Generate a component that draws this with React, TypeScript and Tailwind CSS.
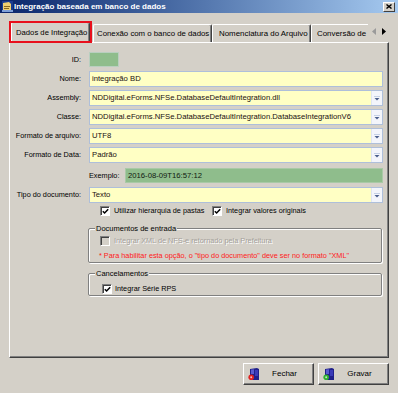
import React from "react";

function Check({ checked, disabled }: { checked?: boolean; disabled?: boolean }) {
  return (
    <span
      className={
        disabled
          ? "relative block w-[10px] h-[10px] shrink-0 border border-t-[#808080] border-l-[#808080] border-r-white border-b-white shadow-[inset_1px_1px_0_#404040] bg-[#d4d0c8]"
          : "relative block w-[10px] h-[10px] shrink-0 border border-t-[#808080] border-l-[#808080] border-r-white border-b-white shadow-[inset_1px_1px_0_#404040] bg-white"
      }
    >
      {checked && (
        <svg className="absolute left-[1px] top-[1px]" width="7" height="7" viewBox="0 0 7 7">
          <path d="M0.8 3.2 L2.6 5 L6.2 1.2" stroke="#000" strokeWidth="1.5" fill="none" />
        </svg>
      )}
    </span>
  );
}

function Arrow() {
  return (
    <div className="ml-auto w-[11px] h-full flex items-center justify-center bg-[#f3f5fb] border-l border-[#dfe6f2]">
      <svg width="6" height="5" viewBox="0 0 6 5">
        <rect x="0" y="0" width="6" height="1" fill="#c5d1e6" />
        <path d="M0.5 2 L5.5 2 L3 4.5 Z" fill="#4a5f8c" />
      </svg>
    </div>
  );
}

function Field({ text, select }: { text: string; select?: boolean }) {
  return (
    <div className="flex items-center w-[294px] h-full bg-[#ffffc4] border border-[#aebfda] overflow-hidden">
      <span className="pl-[2px] text-[7.7px] text-[#1a1010] whitespace-nowrap leading-none">{text}</span>
      {select && <Arrow />}
    </div>
  );
}

function Row({ label, children, cls }: { label: string; children: React.ReactNode; cls: string }) {
  return (
    <div className={"flex items-center " + cls}>
      <div className="w-[72px] text-right text-[7.3px] leading-none whitespace-nowrap pr-[1px]">{label}</div>
      <div className="ml-[7px] h-full flex">{children}</div>
    </div>
  );
}

function FloppyIcon({ color }: { color: string }) {
  return (
    <svg width="12" height="13" viewBox="0 0 12 13">
      <path d="M2 1 L9 0 L11 1 L11 12 L3 12 L2 11 Z" fill="#20208a" />
      <rect x="7" y="2" width="3" height="6" fill="#3a3ab8" />
      <path d="M3 1.5 L6 1.2 L6 6 L3 6 Z" fill="#5a5ad0" />
      <circle cx="3.2" cy="9.3" r="2.8" fill={color} />
      <circle cx="3.2" cy="9.3" r="1" fill="#fff" opacity="0.7" />
    </svg>
  );
}

function Button({ label, color }: { label: string; color: string }) {
  return (
    <div className="relative w-[71px] h-[22px] flex items-center bg-[#d4d0c8] border border-t-white border-l-white border-r-[#404040] border-b-[#404040] shadow-[inset_-1px_-1px_0_#808080]">
      <div className="ml-[4px] mt-[1px]">
        <FloppyIcon color={color} />
      </div>
      <span className="flex-1 text-center text-[8px] leading-none pr-[4px]">{label}</span>
    </div>
  );
}

export default function App() {
  return (
    <div className="relative w-[398px] h-[393px] overflow-hidden bg-[#d4d0c8] text-black font-['Liberation_Sans',Arial,sans-serif]">
      {/* Title bar */}
      <div className="h-[13px] flex items-center bg-linear-to-r from-[#0a246a] to-[#a6caf0]">
        <svg className="ml-[2px]" width="11" height="11" viewBox="0 0 11 11">
          <rect x="0" y="0" width="11" height="11" fill="#1b3d8f" />
          <path d="M1 2 L7 1 L9 3 L9 9 L1 9 Z" fill="#f0d070" />
          <rect x="2" y="5" width="6" height="1" fill="#8a6a20" />
          <rect x="2" y="7" width="5" height="1" fill="#8a6a20" />
          <rect x="0" y="9" width="11" height="2" fill="#7fa0d8" />
        </svg>
        <span className="ml-[1px] text-white font-bold text-[8px] leading-none whitespace-nowrap">
          Integração baseada em banco de dados
        </span>
        <div className="ml-auto mr-[3px] w-[12px] h-[10px] flex items-center justify-center bg-[#d4d0c8] border border-t-white border-l-white border-r-[#404040] border-b-[#404040]">
          <svg width="6" height="5" viewBox="0 0 6 5">
            <path d="M0.5 0.5 L5.5 4.5 M5.5 0.5 L0.5 4.5" stroke="#000" strokeWidth="1.4" />
          </svg>
        </div>
      </div>

      {/* Tabs */}
      <div className="h-[29px] flex items-end pl-[11px]">
        <div className="relative z-10 w-[79px] h-[21px] -mb-[1px] flex items-center pl-[4px] bg-[#d4d0c8] border-t border-l border-white border-r border-r-[#404040] rounded-t-[2px] shadow-[inset_-1px_0_0_#808080]">
          <span className="text-[7.7px] leading-none whitespace-nowrap">Dados de Integração</span>
        </div>
        <div className="ml-[3px] w-[119px] h-[18px] flex items-center pl-[3px] border-t border-l border-white border-r border-r-[#404040] rounded-t-[2px] shadow-[inset_-1px_0_0_#808080]">
          <span className="text-[7.8px] leading-none whitespace-nowrap">Conexão com o banco de dados</span>
        </div>
        <div className="w-[99px] h-[18px] flex items-center pl-[6px] border-t border-l border-white border-r border-r-[#404040] rounded-t-[2px] shadow-[inset_-1px_0_0_#808080]">
          <span className="text-[7.9px] leading-none whitespace-nowrap">Nomenclatura do Arquivo</span>
        </div>
        <div className="w-[57px] h-[18px] flex items-center pl-[5px] border-t border-l border-white rounded-tl-[2px]">
          <span className="text-[7.9px] leading-none whitespace-nowrap">Conversão de</span>
        </div>
        <div className="h-[18px] flex items-center gap-[6px] ml-[4px] mb-[2px]">
          <svg width="4" height="7" viewBox="0 0 4 7">
            <path d="M4 0 L0 3.5 L4 7 Z" fill="#9a9a9a" />
          </svg>
          <svg width="4" height="7" viewBox="0 0 4 7">
            <path d="M0 0 L4 3.5 L0 7 Z" fill="#000" />
          </svg>
        </div>
      </div>

      {/* Panel */}
      <div className="ml-[9px] w-[380px] h-[316px] border-t border-l border-white border-r border-b border-r-[#404040] border-b-[#404040] shadow-[inset_-1px_-1px_0_#808080]">
        <div className="flex flex-col pt-[9px]">
          <Row label="ID:" cls="h-[15px]">
            <div className="w-[30px] h-full bg-[#8fbd8c] border border-[#b9cfc0]" />
          </Row>
          <Row label="Nome:" cls="h-[16px] mt-[4px]">
            <Field text="integração BD" />
          </Row>
          <Row label="Assembly:" cls="h-[16px] mt-[3px]">
            <Field text="NDDigital.eForms.NFSe.DatabaseDefaultIntegration.dll" select />
          </Row>
          <Row label="Classe:" cls="h-[16px] mt-[3px]">
            <Field text="NDDigital.eForms.NFSe.DatabaseDefaultIntegration.DatabaseIntegrationV6" select />
          </Row>
          <Row label="Formato de arquivo:" cls="h-[16px] mt-[3px]">
            <Field text="UTF8" select />
          </Row>
          <Row label="Formato de Data:" cls="h-[16px] mt-[3px]">
            <Field text="Padrão" select />
          </Row>
          <div className="flex items-center h-[15px] mt-[5px] pl-[79px]">
            <span className="w-[36px] text-[7.3px] leading-none whitespace-nowrap">Exemplo:</span>
            <div className="w-[258px] h-full flex items-center bg-[#8fbd8c] border border-[#a9c9a6]">
              <span className="pl-[2px] text-[7.7px] leading-none text-[#101a10] whitespace-nowrap">2016-08-09T16:57:12</span>
            </div>
          </div>
          <Row label="Tipo do documento:" cls="h-[16px] mt-[4px]">
            <Field text="Texto" select />
          </Row>
          <div className="flex items-center h-[10px] mt-[3px] pl-[90px]">
            <Check checked />
            <span className="ml-[4px] w-[98px] text-[7.3px] leading-none whitespace-nowrap">Utilizar hierarquia de pastas</span>
            <Check checked />
            <span className="ml-[4px] text-[7.3px] leading-none whitespace-nowrap">Integrar valores originais</span>
          </div>

          {/* Group 1 */}
          <div className="relative ml-[78px] mt-[12px] w-[294px] h-[35px] rounded-[2px] border border-[#808080] shadow-[inset_1px_1px_0_#fff,1px_1px_0_#fff] pt-[7px] pl-[11px]">
            <span className="absolute -top-[5px] left-[6px] px-[1px] bg-[#d4d0c8] text-[7.5px] leading-[9px] whitespace-nowrap">Documentos de entrada</span>
            <div className="flex items-center h-[10px]">
              <Check disabled />
              <span className="ml-[4px] text-[7.3px] leading-none text-[#a4a09a] whitespace-nowrap [text-shadow:1px_1px_0_#fff]">
                Integrar XML de NFS-e retornado pela Prefeitura
              </span>
            </div>
            <div className="mt-[5px] -ml-[1px] text-[7.3px] leading-[9px] text-[#ff1a1a] whitespace-nowrap">
              * Para habilitar esta opção, o "tipo do documento" deve ser no formato "XML"
            </div>
          </div>

          {/* Group 2 */}
          <div className="relative ml-[78px] mt-[10px] w-[294px] h-[23px] rounded-[2px] border border-[#808080] shadow-[inset_1px_1px_0_#fff,1px_1px_0_#fff] pt-[10px] pl-[13px]">
            <span className="absolute -top-[5px] left-[6px] px-[1px] bg-[#d4d0c8] text-[7.5px] leading-[9px] whitespace-nowrap">Cancelamentos</span>
            <div className="flex items-center h-[9px]">
              <Check checked />
              <span className="ml-[3px] text-[7.3px] leading-none whitespace-nowrap">Integrar Série RPS</span>
            </div>
          </div>
        </div>
      </div>

      {/* Buttons */}
      <div className="flex justify-end gap-[4px] pr-[9px] mt-[5px]">
        <Button label="Fechar" color="#e02020" />
        <Button label="Gravar" color="#30b030" />
      </div>

      {/* Red highlight */}
      <div className="absolute left-[9px] top-[21px] w-[83px] h-[22px] border-2 border-[#e8101c] z-20 pointer-events-none" />
    </div>
  );
}
